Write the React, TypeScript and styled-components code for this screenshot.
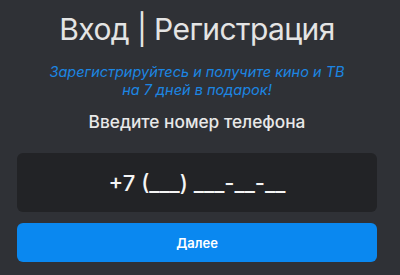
import React from 'react'
import styled, { createGlobalStyle } from 'styled-components'

const Global = createGlobalStyle`
  html, body {
    margin: 0;
    padding: 0;
    background: #2f3136;
  }
  body {
    font-family: Inter, "Noto Sans", sans-serif;
  }
`

const Page = styled.div`
  width: 400px;
  height: 275px;
  box-sizing: border-box;
  padding: 9px 23px 0 17px;
  display: flex;
  flex-direction: column;
  align-items: stretch;
  background: #2f3136;
`

const Title = styled.h1`
  margin: 0;
  font-size: 30px;
  font-weight: 400;
  letter-spacing: -0.6px;
  line-height: 40px;
  color: #e4e4e4;
  text-align: center;
`

const Promo = styled.p`
  margin: 14px 0 0;
  font-size: 14.5px;
  font-style: italic;
  line-height: 18px;
  color: #1c86e3;
  text-align: center;
`

const Label = styled.p`
  margin: 12px 0 0;
  font-size: 17.3px;
  font-weight: 500;
  line-height: 22px;
  color: #e8e8e8;
  text-align: center;
`

const PhoneInput = styled.input`
  margin-top: 20px;
  height: 59px;
  box-sizing: border-box;
  border: none;
  border-radius: 6px;
  background: #222326;
  color: #f4f4f4;
  font-family: inherit;
  font-size: 22px;
  font-weight: 500;
  text-align: center;
  outline: none;
  &::placeholder {
    color: #f4f4f4;
    opacity: 1;
  }
`

const NextButton = styled.button`
  margin-top: 11px;
  height: 39px;
  border: none;
  border-radius: 6px;
  background: #0a88f0;
  color: #ffffff;
  font-family: inherit;
  font-size: 13px;
  font-weight: 600;
  cursor: pointer;
`

export default function App() {
  return (
    <>
      <Global />
      <Page>
        <Title>Вход | Регистрация</Title>
        <Promo>
          Зарегистрируйтесь и получите кино и ТВ
          <br />
          на 7 дней в подарок!
        </Promo>
        <Label>Введите номер телефона</Label>
        <PhoneInput placeholder="+7 (___) ___-__-__" />
        <NextButton>Далее</NextButton>
      </Page>
    </>
  )
}
